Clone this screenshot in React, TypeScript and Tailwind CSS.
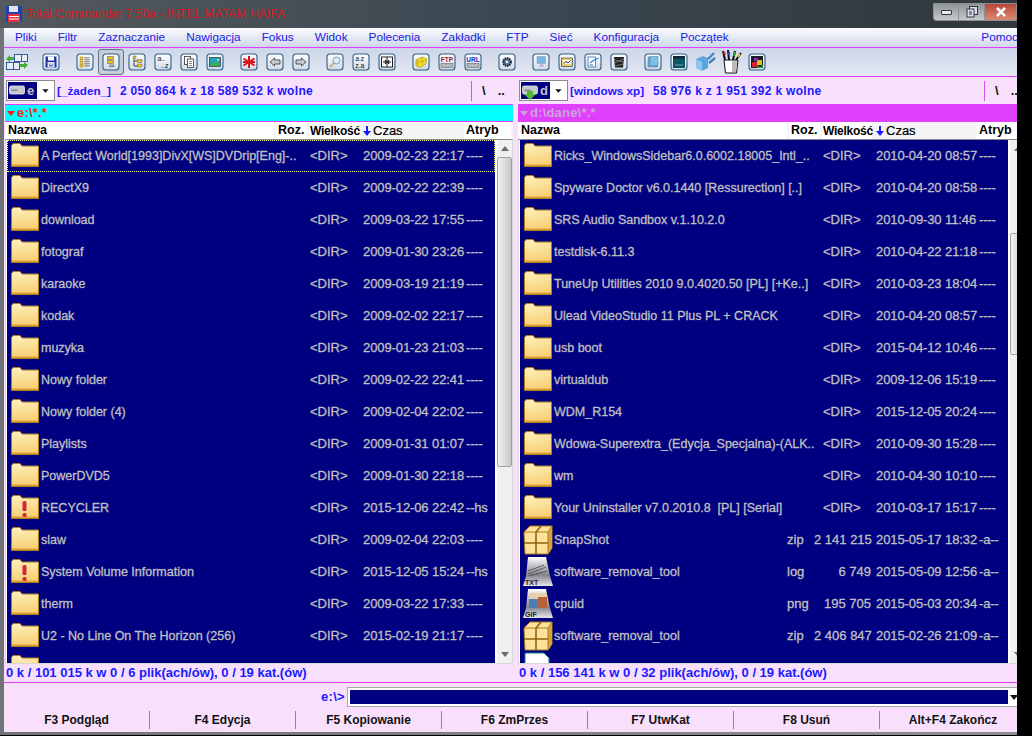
import React from "react";

const LEFT: [string, string, string, string, string, string][] = [
  ["folder", "A Perfect World[1993]DivX[WS]DVDrip[Eng]-..", "", "<DIR>", "2009-02-23 22:17", "----"],
  ["folder", "DirectX9", "", "<DIR>", "2009-02-22 22:39", "----"],
  ["folder", "download", "", "<DIR>", "2009-03-22 17:55", "----"],
  ["folder", "fotograf", "", "<DIR>", "2009-01-30 23:26", "----"],
  ["folder", "karaoke", "", "<DIR>", "2009-03-19 21:19", "----"],
  ["folder", "kodak", "", "<DIR>", "2009-02-02 22:17", "----"],
  ["folder", "muzyka", "", "<DIR>", "2009-01-23 21:03", "----"],
  ["folder", "Nowy folder", "", "<DIR>", "2009-02-22 22:41", "----"],
  ["folder", "Nowy folder (4)", "", "<DIR>", "2009-02-04 22:02", "----"],
  ["folder", "Playlists", "", "<DIR>", "2009-01-31 01:07", "----"],
  ["folder", "PowerDVD5", "", "<DIR>", "2009-01-30 22:18", "----"],
  ["warn", "RECYCLER", "", "<DIR>", "2015-12-06 22:42", "--hs"],
  ["folder", "slaw", "", "<DIR>", "2009-02-04 22:03", "----"],
  ["warn", "System Volume Information", "", "<DIR>", "2015-12-05 15:24", "--hs"],
  ["folder", "therm", "", "<DIR>", "2009-03-22 17:33", "----"],
  ["folder", "U2 - No Line On The Horizon (256)", "", "<DIR>", "2015-02-19 21:17", "----"],
  ["folder", "", "", "", "", ""],
];

const RIGHT: [string, string, string, string, string, string][] = [
  ["folder", "Ricks_WindowsSidebar6.0.6002.18005_Intl_..", "", "<DIR>", "2010-04-20 08:57", "----"],
  ["folder", "Spyware Doctor v6.0.1440 [Ressurection] [..]", "", "<DIR>", "2010-04-20 08:58", "----"],
  ["folder", "SRS Audio Sandbox v.1.10.2.0", "", "<DIR>", "2010-09-30 11:46", "----"],
  ["folder", "testdisk-6.11.3", "", "<DIR>", "2010-04-22 21:18", "----"],
  ["folder", "TuneUp Utilities 2010 9.0.4020.50 [PL] [+Ke..]", "", "<DIR>", "2010-03-23 18:04", "----"],
  ["folder", "Ulead VideoStudio 11 Plus PL + CRACK", "", "<DIR>", "2010-04-20 08:57", "----"],
  ["folder", "usb boot", "", "<DIR>", "2015-04-12 10:46", "----"],
  ["folder", "virtualdub", "", "<DIR>", "2009-12-06 15:19", "----"],
  ["folder", "WDM_R154", "", "<DIR>", "2015-12-05 20:24", "----"],
  ["folder", "Wdowa-Superextra_(Edycja_Specjalna)-(ALK..", "", "<DIR>", "2010-09-30 15:28", "----"],
  ["folder", "wm", "", "<DIR>", "2010-04-30 10:10", "----"],
  ["folder", "Your Uninstaller v7.0.2010.8  [PL] [Serial]", "", "<DIR>", "2010-03-17 15:17", "----"],
  ["zip", "SnapShot", "zip", "2 141 215", "2015-05-17 18:32", "-a--"],
  ["txt", "software_removal_tool", "log", "6 749", "2015-05-09 12:56", "-a--"],
  ["gif", "cpuid", "png", "195 705", "2015-05-03 20:34", "-a--"],
  ["zip", "software_removal_tool", "zip", "2 406 847", "2015-02-26 21:09", "-a--"],
  ["doc", "", "", "", "", ""],
];

function FileIcon({ kind, id }: { kind: string; id: string }) {
  if (kind === "folder" || kind === "warn") {
    return (
      <svg width="32" height="32" viewBox="0 0 32 32" className="shrink-0">
        <defs>
          <linearGradient id={id} x1="0" y1="0" x2="0.2" y2="1">
            <stop offset="0" stopColor="#fff2bd" />
            <stop offset="1" stopColor="#f7cf74" />
          </linearGradient>
        </defs>
        <path d="M2.5 7.5V5.5L4 3.5H11L13 6H29.5V26.5H2.5Z" fill={`url(#${id})`} stroke="#b07c1c" strokeWidth="1" />
        <path d="M3 26H29V24.5H3Z" fill="#d9a23c" />
        {kind === "warn" && (
          <g fill="#d8263a">
            <rect x="13.5" y="9" width="4" height="10" rx="1.5" />
            <rect x="13.5" y="21" width="4" height="4" rx="1.5" />
          </g>
        )}
      </svg>
    );
  }
  if (kind === "zip") {
    return (
      <svg width="32" height="32" viewBox="0 0 32 32" className="shrink-0">
        <path d="M2 8L8 2H30V24L26 30H3Z" fill="#fde39a" stroke="#a87a1c" />
        <path d="M26 8L30 2V24L26 30Z" fill="#d9a23c" />
        <path d="M2 8H26V30M26 8L30 2" fill="none" stroke="#a87a1c" />
        <path d="M14 8V30M2 19H26M14 8L19 2" fill="none" stroke="#8f6414" strokeWidth="1.6" />
      </svg>
    );
  }
  if (kind === "txt" || kind === "gif") {
    return (
      <svg width="32" height="32" viewBox="0 0 32 32" className="shrink-0">
        <defs>
          <linearGradient id={id} x1="0" y1="0" x2="0" y2="1">
            <stop offset="0" stopColor="#ffffff" />
            <stop offset="0.62" stopColor="#83838c" />
            <stop offset="1" stopColor="#e8e8e8" />
          </linearGradient>
        </defs>
        <path d="M6 1H24L28 20L31 30H1L4 20Z" fill={`url(#${id})`} />
        {kind === "txt" ? (
          <path d="M6 18L24 11M6 15L22 9M7 20L25 15" stroke="#444" strokeWidth="0.8" />
        ) : (
          <g>
            <rect x="7" y="5" width="18" height="6" fill="#e8cfa8" />
            <rect x="7" y="11" width="9" height="9" fill="#4a7fb0" />
            <rect x="16" y="9" width="9" height="11" fill="#b8603a" />
          </g>
        )}
        <text x="3" y="29" fontSize="7" fontWeight="700" fill="#222" fontFamily="Liberation Sans, sans-serif">
          {kind === "txt" ? "TXT" : "GIF"}
        </text>
      </svg>
    );
  }
  return (
    <svg width="32" height="32" viewBox="0 0 32 32" className="shrink-0">
      <path d="M3 1H22L27 6V31H3Z" fill="#ffffff" stroke="#117d8c" />
    </svg>
  );
}

function Glyph({ name }: { name: string }) {
  switch (name) {
    case "floppy":
      return (
        <g>
          <rect x="2.5" y="2.5" width="11" height="11" fill="#2433a8" />
          <rect x="5" y="2.5" width="6" height="4" fill="#ffffff" />
          <rect x="4.5" y="8" width="7" height="5.5" fill="#d7dcf0" />
          <path d="M6.5 10.5a1.5 1.5 0 1 0 3 0" fill="none" stroke="#2433a8" />
        </g>
      );
    case "brief":
      return (
        <g>
          <rect x="3" y="3" width="3" height="3" fill="#e5c32a" stroke="#8a7a20" strokeWidth=".4" />
          <rect x="3" y="7" width="3" height="2.5" fill="#e5c32a" stroke="#8a7a20" strokeWidth=".4" />
          <rect x="3" y="10.5" width="3" height="2.5" fill="#e5c32a" stroke="#8a7a20" strokeWidth=".4" />
          <path d="M7 3.5H13M7 5.5H13M7 7.5H13M7 9.5H13M7 11.5H13M9 3V13M11 3V13" stroke="#9a9a9a" strokeWidth=".9" />
        </g>
      );
    case "full":
      return (
        <g>
          <rect x="4.5" y="2.5" width="6" height="3" fill="#e5c32a" stroke="#555" strokeWidth=".5" />
          <rect x="4.5" y="6.5" width="6" height="3" fill="#e5c32a" stroke="#555" strokeWidth=".5" />
          <path d="M6 11H11V12.5H6" fill="none" stroke="#555" strokeWidth=".7" />
        </g>
      );
    case "tree":
      return (
        <g>
          <path d="M5 3V12H9M5 7H9" fill="none" stroke="#333" strokeWidth=".9" />
          <rect x="4" y="2" width="3" height="2.5" fill="#e5c32a" stroke="#555" strokeWidth=".4" />
          <rect x="8.5" y="5.5" width="4.5" height="3" fill="#e5c32a" stroke="#555" strokeWidth=".4" />
          <rect x="8.5" y="10" width="4.5" height="3" fill="#e5c32a" stroke="#555" strokeWidth=".4" />
        </g>
      );
    case "az":
      return (
        <g fill="#111" fontFamily="Liberation Sans, sans-serif" fontSize="7">
          <text x="2.5" y="7">a..</text>
          <text x="6" y="13.5">..z</text>
        </g>
      );
    case "copy":
      return (
        <g fill="#fff" stroke="#333" strokeWidth=".8">
          <rect x="3.5" y="2.5" width="6" height="8" />
          <rect x="6.5" y="5" width="6" height="8.5" />
          <path d="M8 7.5H11M8 9.5H11M8 11.5H11" strokeWidth=".6" />
        </g>
      );
    case "pic":
      return (
        <g>
          <rect x="2.5" y="3.5" width="11" height="9" fill="#22a3b8" stroke="#123" strokeWidth=".6" />
          <path d="M3 12L6.5 7L9 10L11 8L13 12Z" fill="#3fb04a" />
          <circle cx="11" cy="6" r="1" fill="#ffe36a" />
        </g>
      );
    case "star":
      return <path d="M8 2V14M2.5 4.5L13.5 11.5M13.5 4.5L2.5 11.5M2 8H14" stroke="#d8141c" strokeWidth="2" />;
    case "left":
      return <path d="M3 8L7.5 4V6H13V10H7.5V12Z" fill="#c8ccd4" stroke="#333" strokeWidth=".8" />;
    case "right":
      return <path d="M13 8L8.5 4V6H3V10H8.5V12Z" fill="#c8ccd4" stroke="#333" strokeWidth=".8" />;
    case "find":
      return (
        <g>
          <circle cx="9.5" cy="6.5" r="3.5" fill="#d6effa" stroke="#7aa0bd" />
          <path d="M7 9L3 13" stroke="#d6a86a" strokeWidth="1.8" />
        </g>
      );
    case "azza":
      return (
        <g fill="#111" fontFamily="Liberation Sans, sans-serif" fontSize="6.8">
          <text x="2.2" y="7">a.z</text>
          <text x="2.2" y="13.5">z.a</text>
        </g>
      );
    case "cmp":
      return (
        <g>
          <rect x="2.5" y="3" width="11" height="10" fill="#fff" stroke="#222" />
          <path d="M8 3V13" stroke="#222" />
          <path d="M4 8H7.5M12 8H8.5M6 6L7.5 8L6 10M10 6L8.5 8L10 10" fill="none" stroke="#111" strokeWidth="1.1" />
        </g>
      );
    case "net":
      return (
        <g>
          <path d="M3 6L9 3L13.5 4.5L13 10L7 13.5L3 11.5Z" fill="#f4dc2c" stroke="#b69a12" strokeWidth=".7" />
          <path d="M3 8.5L13 6.5M5 5V12.5M9 3.5L9.5 11.5" stroke="#b69a12" strokeWidth=".6" />
        </g>
      );
    case "ftp":
    case "url":
      return (
        <g>
          <text x="8" y="8" textAnchor="middle" fontSize="6.5" fontWeight="700" fill={name === "ftp" ? "#a8141c" : "#1c2fc0"} fontFamily="Liberation Sans, sans-serif">
            {name.toUpperCase()}
          </text>
          <rect x="2" y="9.5" width="12" height="4" fill="#b4b8bc" stroke="#555" strokeWidth=".5" />
        </g>
      );
    case "gear":
      return (
        <g>
          <circle cx="8" cy="8" r="4" fill="#4a6a8a" stroke="#223" strokeDasharray="1.4 .9" strokeWidth="1.8" />
          <circle cx="8" cy="8" r="1.4" fill="#dfe6ee" />
        </g>
      );
    case "pc":
      return (
        <g>
          <rect x="4" y="2.5" width="8.5" height="7" fill="#76b4ec" stroke="#8aa0b8" strokeWidth=".6" />
          <path d="M7 10H10L11 13H6Z" fill="#c4b6d8" />
        </g>
      );
    case "chart":
      return (
        <g>
          <rect x="2.5" y="4" width="11" height="8.5" fill="#e8d070" stroke="#444" strokeWidth=".7" />
          <rect x="4" y="6" width="8" height="4" fill="#fff" />
          <path d="M4.5 9.5L7 7.5L9 9L11.5 6.5" fill="none" stroke="#333" />
        </g>
      );
    case "note":
      return (
        <g>
          <rect x="3" y="3" width="7.5" height="10" fill="#fff" stroke="#2c6fb0" strokeWidth=".8" />
          <path d="M5 9L9 6L13.5 4" fill="none" stroke="#2a80d0" strokeWidth="1.3" />
          <path d="M4.5 11H8" stroke="#2c6fb0" />
        </g>
      );
    case "bin":
      return (
        <g>
          <path d="M3 3H13L12 13.5H4Z" fill="#222" />
          <path d="M3.5 6L12.5 8M3.5 9L12.5 5M4 12L12 10" stroke="#888" strokeWidth=".8" />
        </g>
      );
    case "bluedoc":
      return (
        <g>
          <rect x="3" y="3" width="9.5" height="10" fill="#5ea8dc" stroke="#76838f" strokeWidth=".7" />
          <rect x="5" y="2.5" width="8" height="9" fill="#7cc0ec" stroke="#5a7f9c" strokeWidth=".5" />
        </g>
      );
    case "console":
      return (
        <g>
          <rect x="2" y="2" width="12" height="12" fill="#0d5560" />
          <rect x="2" y="2" width="12" height="2.5" fill="#123" />
          <path d="M4 11H12" stroke="#9ad" strokeWidth=".8" />
        </g>
      );
    case "reg":
      return (
        <g>
          <rect x="2" y="2" width="12" height="12" fill="#1c1c24" />
          <rect x="3" y="8" width="5" height="5" fill="#d8202a" />
          <rect x="8" y="6" width="5" height="5" fill="#e0c020" />
          <rect x="5" y="4" width="4" height="3" fill="#8830c0" />
          <path d="M9 11V13.5H13V11" fill="none" stroke="#28c040" strokeWidth="1.1" />
        </g>
      );
    default:
      return null;
  }
}

function ToolIcon({ name, id }: { name: string; id: string }) {
  return (
    <svg width="18" height="18" viewBox="-1 -1 18 18">
      <defs>
        <linearGradient id={id} x1="0" y1="0" x2="0" y2="1">
          <stop offset="0" stopColor="#ffffff" />
          <stop offset="1" stopColor="#cfdae8" />
        </linearGradient>
      </defs>
      <rect x="0" y="0" width="16" height="16" rx="3" fill={`url(#${id})`} stroke="#2f5f85" strokeWidth="1.1" />
      <Glyph name={name} />
    </svg>
  );
}

function SyncIcon() {
  return (
    <svg width="24" height="18" viewBox="0 0 24 18">
      <g fill="#e8eef8" stroke="#3b5a9c" strokeWidth="1">
        <rect x="9.5" y="1.5" width="7" height="7" />
        <rect x="16.5" y="1.5" width="6" height="7" />
        <rect x="1.5" y="9.5" width="7" height="7" />
        <rect x="8.5" y="9.5" width="6" height="7" />
      </g>
      <path d="M9 4H5V2L1 6L5 9V7H9Z" fill="#3fae3a" />
      <path d="M15 14H19V16L23 12L19 9V11H15Z" fill="#3fae3a" />
    </svg>
  );
}

function CubesIcon() {
  return (
    <svg width="22" height="20" viewBox="0 0 22 20">
      <path d="M2 7L9 4L14 6V16L8 19L2 16Z" fill="#58a6dc" />
      <path d="M2 7L8 10V19L2 16Z" fill="#8cc6ec" />
      <path d="M14 7L20 1M15 11L21 6" stroke="#3f86bd" strokeWidth="2.4" />
    </svg>
  );
}

function CupIcon() {
  return (
    <svg width="22" height="24" viewBox="0 0 22 24">
      <path d="M5 10L3 1M9 10L8 0M13 10L15 1M16 10L21 3" strokeWidth="2" stroke="#111" />
      <path d="M5 5L4 2" stroke="#d0202a" strokeWidth="2" />
      <path d="M9 5V2" stroke="#2a40c0" strokeWidth="2" />
      <path d="M14 6L15 2" stroke="#28a040" strokeWidth="2" />
      <path d="M18 7L20 4" stroke="#e0c020" strokeWidth="2" />
      <path d="M4 10H18L16.5 23H5.5Z" fill="#ffffff" stroke="#111" />
      <path d="M12 11H17L16 22H12Z" fill="#bbb" />
    </svg>
  );
}

const TOOL_GROUPS: string[][] = [
  ["sync"],
  ["floppy"],
  ["brief", "full", "tree", "az", "copy", "pic"],
  ["star", "left", "right"],
  ["find", "azza", "cmp"],
  ["net", "ftp", "url"],
  ["gear"],
  ["pc", "chart", "note", "bin"],
  ["bluedoc", "console", "cubes", "cup", "reg"],
];

function Toolbar() {
  return (
    <div className="flex h-[28px] items-center gap-2 bg-gradient-to-b from-[#cdd5e9] to-[#e3e8f2]">
      {TOOL_GROUPS.map((g, gi) => (
        <div key={gi} className="flex">
          {g.map((n) => (
            <div
              key={n}
              className={
                n === "full"
                  ? "flex h-[26px] w-[26px] items-center justify-center rounded-[3px] border border-[#6b7480] bg-[#c5cdd9]"
                  : "flex h-[26px] w-[26px] items-center justify-center"
              }
            >
              {n === "sync" ? <SyncIcon /> : n === "cubes" ? <CubesIcon /> : n === "cup" ? <CupIcon /> : <ToolIcon name={n} id={`tb-${n}`} />}
            </div>
          ))}
        </div>
      ))}
    </div>
  );
}

function DriveIcon({ letter }: { letter: string }) {
  return (
    <svg width="16" height="18" viewBox="0 0 16 18" className="shrink-0">
      <rect x="0.5" y="4" width="15" height="8" rx="1.5" fill="#c4c8cc" stroke="#e8eaec" strokeWidth=".8" />
      <rect x="2.5" y="7.5" width="6" height="1.5" fill="#889" />
      {letter === "d" && <path d="M8 18L2 12H5V9H11V12H14Z" fill="#52b52c" />}
    </svg>
  );
}

function Combo({ letter }: { letter: string }) {
  return (
    <div className="flex h-[21px] w-[49px] shrink-0 items-center border border-[#8a8a90] bg-white p-px">
      <div className="flex h-full w-[29px] shrink-0 items-center gap-[2px] bg-[#000080] pl-[1px] text-[13px] font-bold text-[#c0c0c0]">
        <DriveIcon letter={letter} />
        <span className="leading-none">{letter}</span>
      </div>
      <svg width="18" height="10" viewBox="0 0 18 10">
        <path d="M6 3H13L9.5 7Z" fill="#111" />
      </svg>
    </div>
  );
}

const COL_HEAD = "flex h-[17px] items-center text-[12.5px] font-bold text-black pl-0.5 border-r-2 border-[#f4f4f4]";

function Row({ row, focused, id }: { row: [string, string, string, string, string, string]; focused: boolean; id: string }) {
  const [kind, name, ext, size, date, attr] = row;
  return (
    <div
      className={
        "flex h-[32px] shrink-0 items-center text-[13px] text-[#c0c0c0] [-webkit-text-stroke:0.3px_#c0c0c0] " +
        (focused ? "border border-dotted border-[#ffff80]" : "border border-transparent")
      }
    >
      <div className="ml-[1px] flex w-[32px] shrink-0 justify-center">
        <FileIcon kind={kind} id={id} />
      </div>
      <span className={"shrink-0 overflow-hidden whitespace-pre text-[12.5px] " + (ext ? "w-[233px]" : "w-[268px]")}>{name}</span>
      {ext ? <span className="w-[27px] shrink-0">{ext}</span> : null}
      <span className={"shrink-0 whitespace-nowrap " + (ext ? "w-[62px] pr-[5px] text-right" : "w-[54px] pl-[1px]")}>{size}</span>
      <span className="w-[103px] shrink-0 whitespace-nowrap tracking-[-0.1px]">{date}</span>
      <span className="whitespace-nowrap tracking-[-0.2px]">{attr}</span>
    </div>
  );
}

function Panel({
  side,
  letter,
  label,
  free,
  path,
  active,
  rows,
  status,
  thumbTop,
  thumbH,
}: {
  side: string;
  letter: string;
  label: string;
  free: string;
  path: string;
  active: boolean;
  rows: [string, string, string, string, string, string][];
  status: string;
  thumbTop: string;
  thumbH: string;
}) {
  return (
    <div className="flex w-[508px] shrink-0 flex-col">
      <div className="flex h-[27px] items-center pl-px">
        <Combo letter={letter} />
        <div className="ml-[2px] flex h-[22px] flex-1 items-center gap-[9px] whitespace-nowrap text-[11.7px] font-bold text-[#1a1aff]">
          <span>{label}</span>
          <span className="text-[12px] tracking-[0.3px]">{free}</span>
        </div>
        <div className="flex h-[20px] w-[42px] shrink-0 items-center border-l border-[#d94cf0] text-[13px] font-bold text-[#111]">
          <span className="ml-[10px]">\</span>
          <span className="ml-[12px]">..</span>
        </div>
      </div>
      <div
        className={
          "flex h-[17px] items-center gap-0.5 border-t border-[#e040fb] pl-[2px] text-[13px] font-bold " +
          (active ? "bg-[#00ffff] text-[#ff1a1a]" : "bg-[#e040fb] text-[#c9a6d6]")
        }
      >
        <svg width="8" height="6" viewBox="0 0 8 6">
          <path d="M0 1H8L4 6Z" fill="currentColor" />
        </svg>
        <span className="tracking-[0.2px]">{path}</span>
      </div>
      <div className="flex h-[18px] border-t border-[#e040fb] bg-white pl-px">
        <div className={COL_HEAD + " w-[270px] bg-white"}>Nazwa</div>
        <div className={COL_HEAD + " w-[33px] bg-white"}>Roz.</div>
        <div className={COL_HEAD + " w-[52px] whitespace-nowrap bg-white !pl-px !text-[12px] tracking-[-0.25px]"}>Wielkość</div>
        <div className={COL_HEAD + " w-[103px] gap-0.5 bg-[#f4f4f4] !font-normal text-[13px]"}>
          <svg width="8" height="10" viewBox="0 0 8 10">
            <path d="M3 0H5V5H8L4 10L0 5H3Z" fill="#1a1aff" />
          </svg>
          <span className="[-webkit-text-stroke:0.2px_#000]">Czas</span>
        </div>
        <div className={COL_HEAD + " flex-1 border-r-0 bg-white"}>Atryb</div>
      </div>
      <div className="flex h-[525px] gap-[2px] border border-[#d8d8d8] border-t-[#8a8a8a] bg-white pl-px">
        <div className="flex w-[488px] shrink-0 flex-col overflow-hidden bg-[#000080]">
          {rows.map((r, i) => (
            <Row key={i} row={r} focused={active && i === 0} id={`${side}-${i}`} />
          ))}
        </div>
        <div className="relative flex-1 bg-[#f0f0f0]">
          <svg className="absolute left-[4px] top-[6px]" width="8" height="5" viewBox="0 0 8 5">
            <path d="M4 0L8 5H0Z" fill="#6a6a6a" />
          </svg>
          <div className={"absolute left-0 right-0 rounded-[2px] border border-[#a0a0a0] bg-gradient-to-r from-[#f2f2f2] to-[#c8c8c8] " + thumbTop + " " + thumbH} />
          <svg className="absolute bottom-[6px] left-[4px]" width="8" height="5" viewBox="0 0 8 5">
            <path d="M0 0H8L4 5Z" fill="#6a6a6a" />
          </svg>
        </div>
      </div>
      <div className="flex h-[18px] items-center whitespace-nowrap pl-px text-[13px] font-bold text-[#1a1aff]">{status}</div>
    </div>
  );
}

const MENU = ["Pliki", "Filtr", "Zaznaczanie", "Nawigacja", "Fokus", "Widok", "Polecenia", "Zakładki", "FTP", "Sieć", "Konfiguracja", "Początek"];
const KEYS = ["F3 Podgląd", "F4 Edycja", "F5 Kopiowanie", "F6 ZmPrzes", "F7 UtwKat", "F8 Usuń", "Alt+F4 Zakończ"];

export default function App() {
  return (
    <div className="h-[736px] w-[1032px] overflow-hidden bg-black font-['Liberation_Sans',sans-serif]">
      <div className="h-[735px] w-[1017px] overflow-hidden bg-gradient-to-r from-[#6f7478] to-[#8b9094]">
        <div className="relative flex h-[28px] items-center bg-gradient-to-r from-[#54595d] via-[#3b4852] to-[#30373c] pl-[6px]">
          <svg width="16" height="16" viewBox="0 0 16 16" className="shrink-0">
            <rect x="0" y="0" width="16" height="16" fill="#1f3fb4" />
            <rect x="3" y="0" width="9" height="6" fill="#dfe6f2" />
            <rect x="2" y="8" width="12" height="8" fill="#e8303c" />
            <path d="M3 10.5H13M3 13H13" stroke="#fff" />
          </svg>
          <span className="ml-[4px] whitespace-nowrap text-[12.2px] text-[#d81a1e]">Total Commander 7.50a - INTEL MATAM HAIFA</span>
          <div className="absolute right-0 top-[3px] flex h-[18px] w-[84px] overflow-hidden rounded-bl-[3px] border border-[#8a9094]">
            <div className="flex w-[25px] items-center justify-center border-r border-[#8a9094] bg-gradient-to-b from-[#8e9599] to-[#c5cacc]">
              <div className="h-[5px] w-[11px] rounded-[1px] border border-[#33383c] bg-[#e8eaec]" />
            </div>
            <div className="flex w-[26px] items-center justify-center border-r border-[#8a9094] bg-gradient-to-b from-[#8e9599] to-[#c5cacc]">
              <svg width="12" height="12" viewBox="0 0 12 12">
                <rect x="3.5" y="0.5" width="8" height="8" fill="#dde" stroke="#33383c" />
                <rect x="1" y="3" width="7" height="8" fill="#dde" stroke="#33383c" />
                <rect x="3" y="5" width="3" height="4" fill="#889" />
              </svg>
            </div>
            <div className="flex flex-1 items-center justify-center bg-gradient-to-b from-[#b8483a] to-[#d88a70]">
              <svg width="12" height="10" viewBox="0 0 12 10">
                <path d="M2 1L10 9M10 1L2 9" stroke="#f2f2f2" strokeWidth="2.6" />
                <path d="M2 1L10 9M10 1L2 9" stroke="#ffffff" strokeWidth="1.2" />
              </svg>
            </div>
          </div>
        </div>
        <div className="ml-[4px] flex w-[1024px] flex-col bg-[#f8e0fc]">
          <div className="flex h-[20px] items-center gap-[21px] border-b border-[#e040fb] bg-gradient-to-b from-[#fbfcfe] to-[#cfd7ea] pl-[11px] text-[11.8px] text-[#2020e0]">
            {MENU.map((m) => (
              <span key={m}>{m}</span>
            ))}
            <span className="ml-auto mr-[10px]">Pomoc</span>
          </div>
          <div className="border-b border-[#e040fb]">
            <Toolbar />
          </div>
          <div className="flex h-[655px] flex-col">
            <div className="flex">
              <div className="ml-px">
                <Panel
                  side="l"
                  letter="e"
                  label="[_żaden_]"
                  free="2 050 864 k z 18 589 532 k wolne"
                  path="e:\*.*"
                  active
                  rows={LEFT}
                  status="0 k / 101 015 k w 0 / 6 plik(ach/ów), 0 / 19 kat.(ów)"
                  thumbTop="top-[17px]"
                  thumbH="h-[310px]"
                />
              </div>
              <div className="w-[5px] shrink-0" />
              <Panel
                side="r"
                letter="d"
                label="[windows xp]"
                free="58 976 k z 1 951 392 k wolne"
                path="d:\dane\*.*"
                active={false}
                rows={RIGHT}
                status="0 k / 156 141 k w 0 / 32 plik(ach/ów), 0 / 19 kat.(ów)"
                thumbTop="top-[93px]"
                thumbH="h-[122px]"
              />
            </div>
            <div className="h-px bg-[#e040fb]" />
            <div className="flex h-[28px] items-center">
              <span className="w-[341px] text-right text-[13px] font-bold tracking-[0.3px] text-[#1a1aff]">e:\&gt;</span>
              <div className="ml-[2px] flex h-[20px] flex-1 items-center border border-[#a8a8a8] bg-white py-[2px] pl-[2px]">
                <div className="h-full w-[658px] bg-[#000080]" />
                <svg width="8" height="5" viewBox="0 0 8 5" className="ml-[2px]">
                  <path d="M0 0H8L4 5Z" fill="#111" />
                </svg>
              </div>
            </div>
            <div className="flex h-[20px]">
              {KEYS.map((k, i) => (
                <div
                  key={k}
                  className={
                    "flex h-[18px] w-[146px] shrink-0 items-center justify-center text-[12px] font-bold text-[#111] " +
                    (i < 6 ? "border-r border-[#d94cf0]" : "")
                  }
                >
                  {k}
                </div>
              ))}
            </div>
          </div>
        </div>
      </div>
    </div>
  );
}
